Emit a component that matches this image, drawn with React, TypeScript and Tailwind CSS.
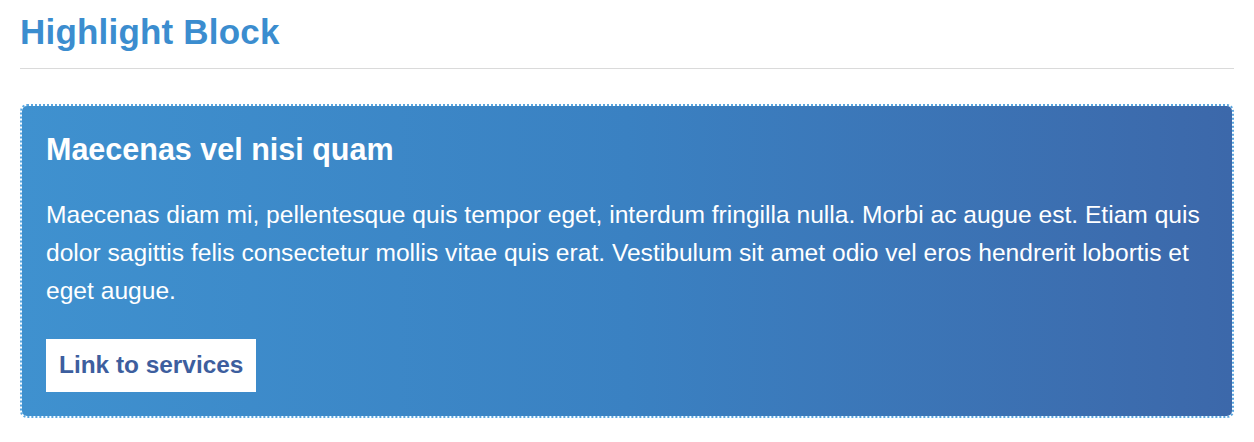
import React from 'react';

const App: React.FC = () => {
  return (
    <div className="min-h-screen bg-white px-5 pt-3 font-['Liberation_Sans',Arial,sans-serif]">
      <h1 className="text-[35px] leading-[40px] font-bold text-[#3b8dcf] tracking-[0.2px]">Highlight Block</h1>
      <hr className="mt-4 border-0 border-t border-[#dadada]" />

      <div className="mt-[35px] rounded-[7px] border-2 border-dotted border-[#5aa6df] bg-clip-padding bg-gradient-to-r from-[#3f91cf] via-[#3a81c2] to-[#3c68aa] px-[24px] pt-[25px] pb-[24px] text-white">
        <h2 className="text-[30.5px] leading-[36px] font-bold">Maecenas vel nisi quam</h2>
        <p className="mt-[29px] text-[24.6px] leading-[38px]">
          Maecenas diam mi, pellentesque quis tempor eget, interdum fringilla nulla. Morbi ac augue est. Etiam quis
          dolor sagittis felis consectetur mollis vitae quis erat. Vestibulum sit amet odio vel eros hendrerit lobortis et
          eget augue.
        </p>
        <a
          href="#"
          className="mt-[29px] inline-flex h-[53px] items-center bg-white px-[13px] text-[24.4px] font-bold text-[#3d5e9e]"
        >
          Link to services
        </a>
      </div>
    </div>
  );
};

export default App;
